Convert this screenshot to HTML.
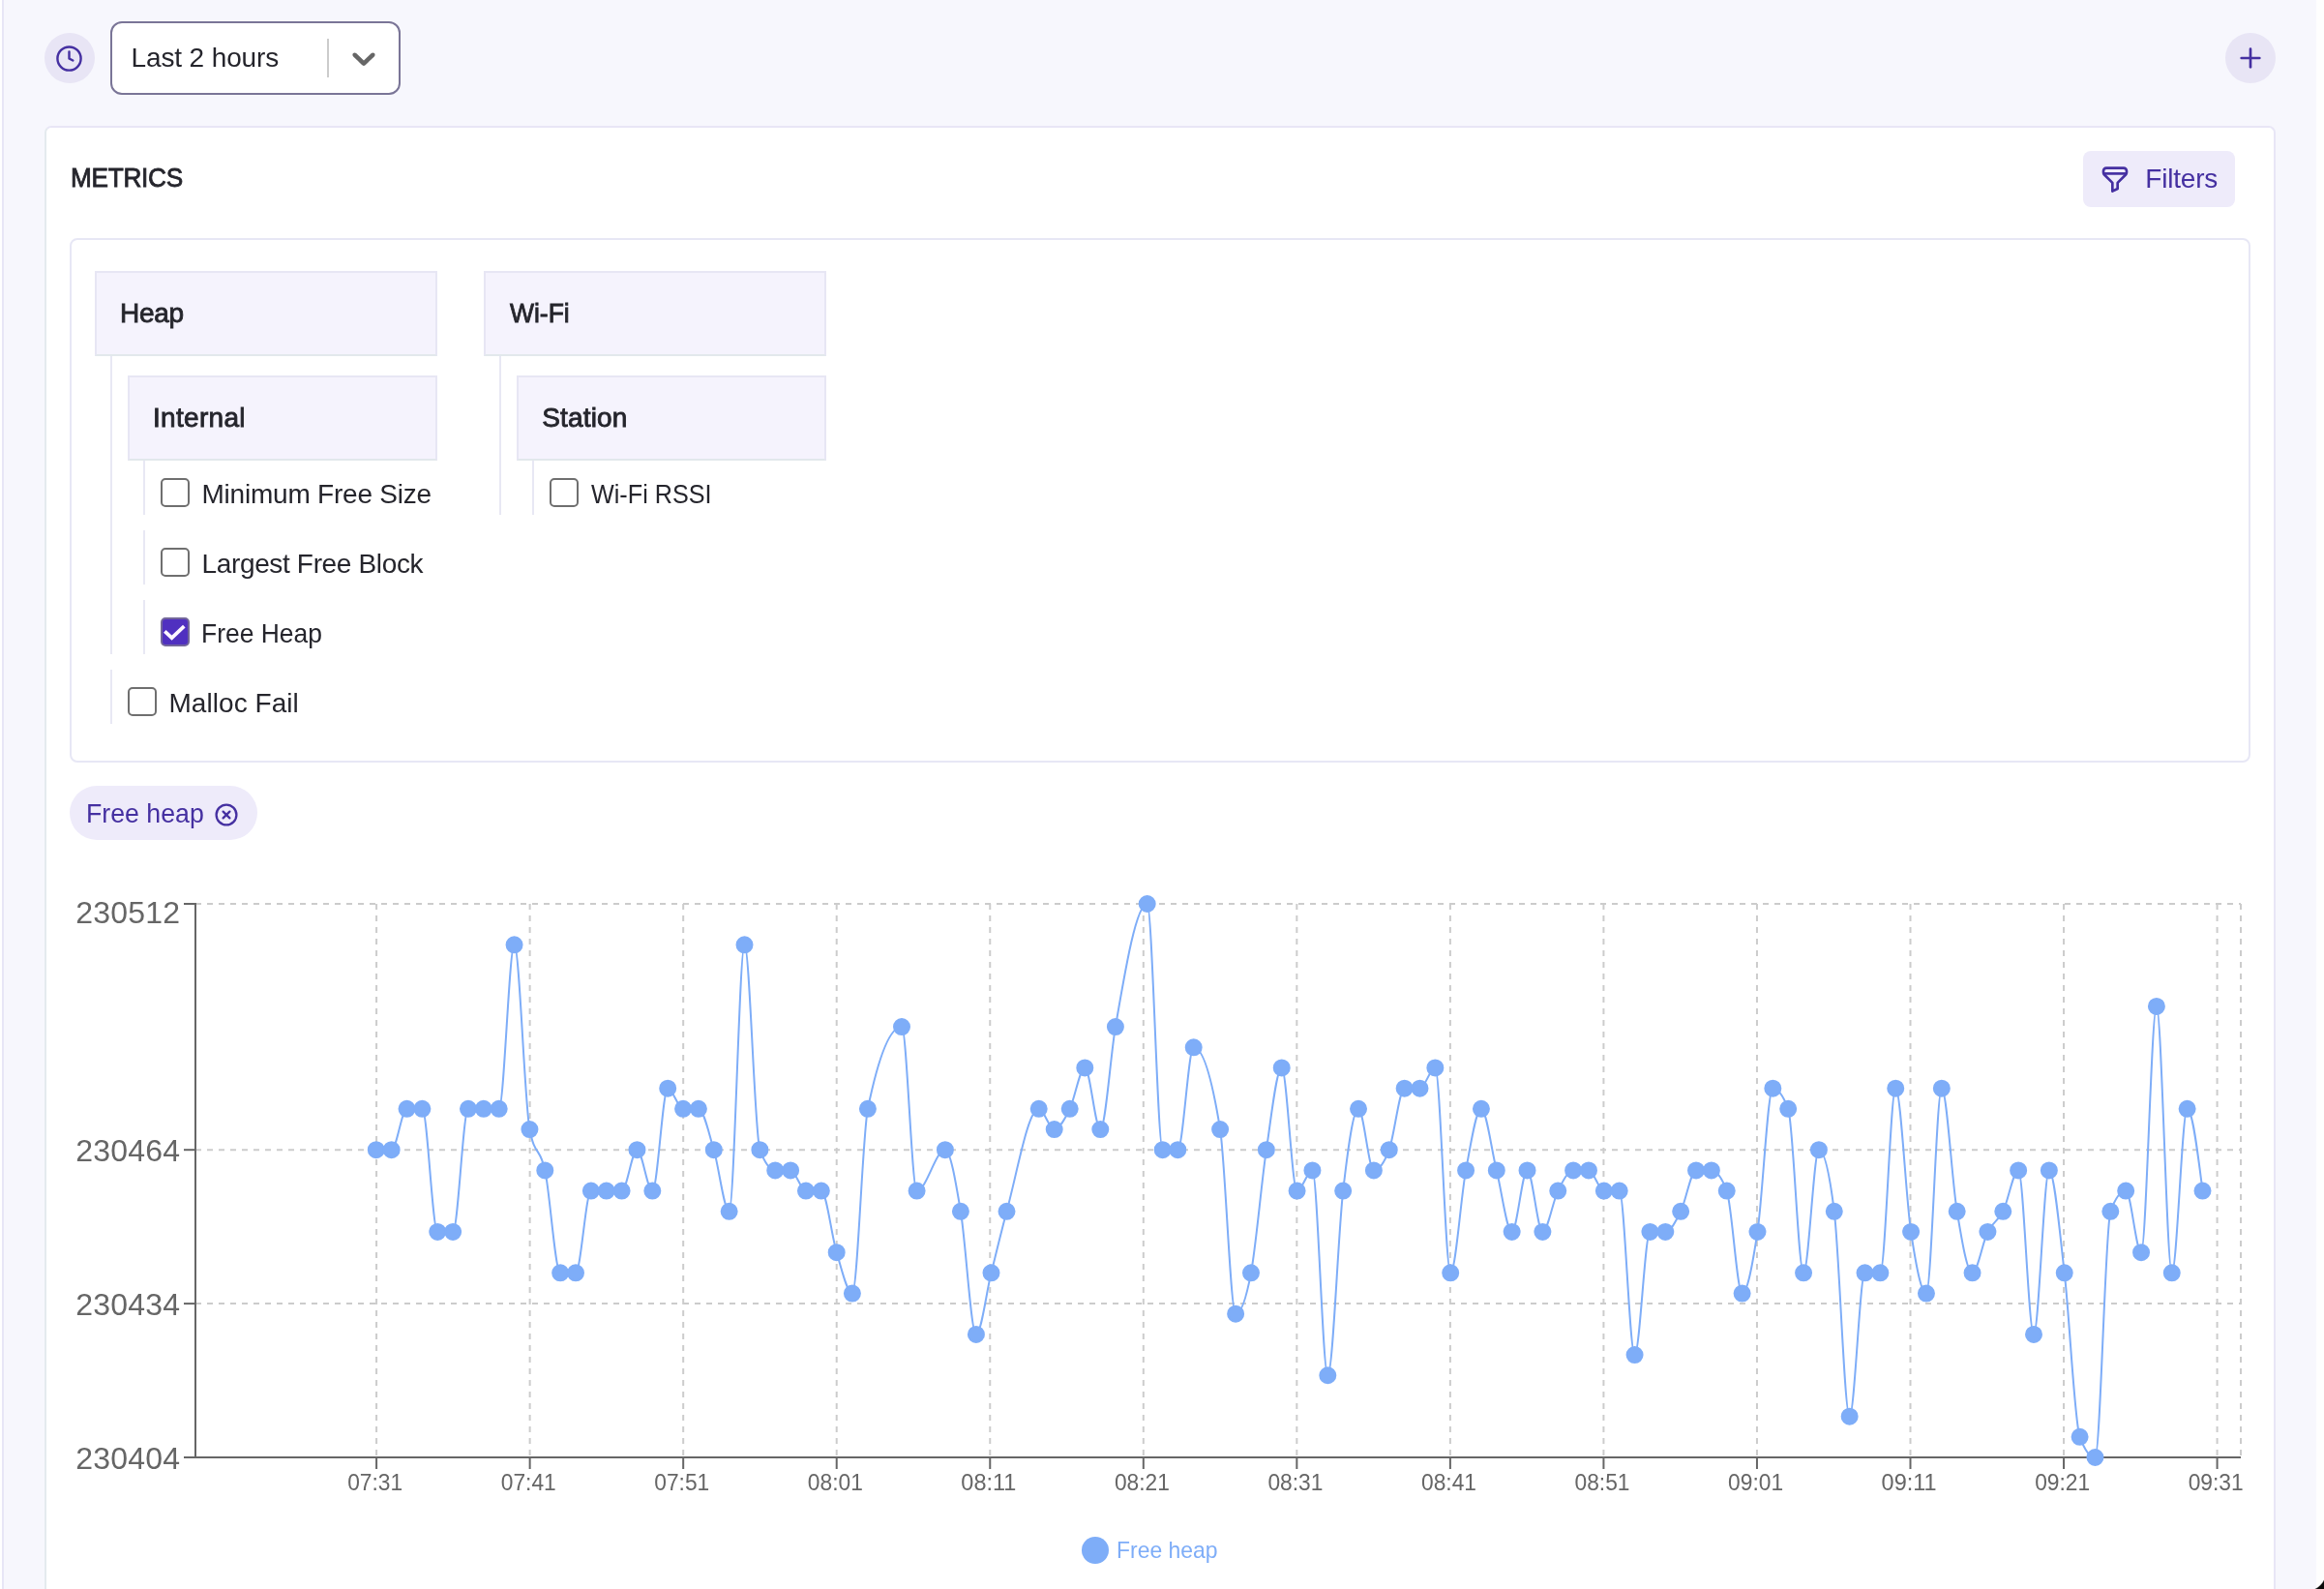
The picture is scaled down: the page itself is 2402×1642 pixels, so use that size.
<!DOCTYPE html>
<html><head><meta charset="utf-8"><title>Metrics</title>
<style>
*{box-sizing:border-box}
html,body{margin:0;padding:0}
html{width:2402px;height:1642px;overflow:hidden}
body{width:2402px;height:1642px;overflow:hidden;position:relative;will-change:transform;background:#f7f7fd;font-family:"Liberation Sans",sans-serif;color:#25252c;font-size:28px}
.abs,.gb,.vl,.cb,.lbl,.med,.chart{position:absolute}
.lstrip{left:0;top:0;width:4px;height:1642px;background:linear-gradient(90deg,#fff 0,#fff 2px,#e8e6f6 2px,#e8e6f6 4px)}
.rstrip{left:2393.5px;top:0;width:8.5px;height:1642px;background:#fefefe}
.corner{left:2384px;top:1624px;width:18px;height:18px;background:radial-gradient(circle at 0 0,rgba(0,0,0,0) 0,rgba(0,0,0,0) 19.4px,#0a0a0a 20.6px)}
.circ{width:52px;height:52px;border-radius:26px;background:#e8e5f5}
.circ svg{position:absolute;left:10px;top:10px}
.sel{left:114px;top:22px;width:300px;height:76px;border:2px solid #7a7597;border-radius:12px;background:#fff}
.sel .t{position:absolute;left:19.5px;top:20px;line-height:32px;letter-spacing:-0.12px;white-space:nowrap}
.sel .sep{position:absolute;left:222px;top:16px;width:2px;height:40px;background:#ccc}
.sel svg{position:absolute;left:240px;top:16px}
.card{left:46px;top:130px;width:2306px;height:1512px;border:2px solid #e8e6f6;border-left-color:#e4eaee;border-bottom:0;border-radius:7px 7px 0 0;background:#fff}
.h{left:72.5px;top:168px;line-height:32px;letter-spacing:-0.3px;-webkit-text-stroke:0.85px #25252c;white-space:nowrap;transform:scaleX(0.935);transform-origin:0 0}
.fbtn{left:2153px;top:156px;width:157px;height:58px;border-radius:8px;background:#eeebfa;color:#4530a1}
.fbtn svg{position:absolute;left:17px;top:13px}
.fbtn span{position:absolute;left:64.3px;top:13px;line-height:32px;letter-spacing:-0.2px}
.panel{left:72px;top:246px;width:2254px;height:542px;border:2px solid #e7e7f5;border-radius:8px;background:#fff}
.gb{background:#f5f3fd;border:2px solid #e7e6f4;border-bottom-color:#e2e8ec}
.med{top:26px;transform-origin:0 0;line-height:32px;-webkit-text-stroke:0.85px #25252c;white-space:nowrap}
.vl{width:2px;background:#e8e8f4}
.cb{width:30px;height:30px;border:2px solid #6f6f6f;border-radius:5px;background:#fff}
.cb.on{background:#5030c0;border-color:#73679b}
.cb svg{position:absolute;left:-2px;top:-2px}
.lbl{line-height:36px;white-space:nowrap;transform-origin:0 0}
.chip{left:72px;top:812px;width:194px;height:56px;border-radius:28px;background:#eeebfa;color:#4530a1}
.chip span{position:absolute;left:17px;top:13px;line-height:32px;transform:scaleX(0.954);transform-origin:0 0;letter-spacing:0px;white-space:nowrap}
.chip svg{position:absolute;left:148px;top:16px}
.chart{left:0;top:0}
</style></head>
<body>
<div class="abs lstrip"></div><div class="abs rstrip"></div>
<div class="abs circ" style="left:46px;top:34px"><svg style="left:11.3px;top:11.9px" width="29" height="29" viewBox="0 0 24 24" fill="none" stroke="#4530a1" stroke-width="2" stroke-linecap="round" stroke-linejoin="round"><circle cx="12" cy="12" r="10"/><polyline points="12 6.2 12 12 15.2 13.7"/></svg></div>
<div class="abs sel"><span class="t">Last 2 hours</span><div class="sep"></div><svg width="40" height="40" viewBox="0 0 20 20" fill="#666"><path d="M4.516 7.548c0.436-0.446 1.043-0.481 1.576 0l3.908 3.747 3.908-3.747c0.533-0.481 1.141-0.446 1.574 0 0.436 0.445 0.408 1.197 0 1.615-0.406 0.418-4.695 4.502-4.695 4.502-0.217 0.223-0.502 0.335-0.787 0.335s-0.57-0.112-0.789-0.335c0 0-4.287-4.084-4.695-4.502s-0.436-1.17 0-1.615z"/></svg></div>
<div class="abs circ" style="left:2300px;top:34px"><svg width="32" height="32" viewBox="0 0 24 24" fill="none" stroke="#4530a1" stroke-width="2" stroke-linecap="round" stroke-linejoin="round"><line x1="12" y1="5" x2="12" y2="19"/><line x1="5" y1="12" x2="19" y2="12"/></svg></div>
<div class="abs card"></div>
<div class="abs h">METRICS</div>
<div class="abs fbtn"><svg width="32" height="32" viewBox="0 0 24 24" fill="none" stroke="#4530a1" stroke-width="2" stroke-linejoin="round"><path d="M3 5.8a2.3 2.3 0 0 1 2.3-2.3h13.4a2.3 2.3 0 0 1 2.3 2.3v1.1a2.4 2.4 0 0 1-.7 1.7L14 14.9v4.6l-4 2v-6.6L3.7 8.6a2.4 2.4 0 0 1-.7-1.7z"/><path d="M3.4 7.8h17.2"/></svg><span>Filters</span></div>
<div class="abs panel"></div>
<div class="gb" style="left:98px;top:280px;width:354px;height:88px"><span class="med" style="left:24.1px;letter-spacing:-0.35px;transform:scaleX(1)">Heap</span></div><div class="gb" style="left:132px;top:388px;width:320px;height:88px"><span class="med" style="left:24px;letter-spacing:0.3px;transform:scaleX(1)">Internal</span></div><div class="gb" style="left:500px;top:280px;width:354px;height:88px"><span class="med" style="left:24.6px;letter-spacing:0px;transform:scaleX(0.945)">Wi-Fi</span></div><div class="gb" style="left:534px;top:388px;width:320px;height:88px"><span class="med" style="left:24.3px;letter-spacing:0.15px;transform:scaleX(1)">Station</span></div><div class="vl" style="left:114px;top:368px;height:308px"></div><div class="vl" style="left:114px;top:692px;height:56px"></div><div class="vl" style="left:148px;top:476px;height:56px"></div><div class="vl" style="left:148px;top:548px;height:56px"></div><div class="vl" style="left:148px;top:620px;height:56px"></div><div class="vl" style="left:516px;top:368px;height:164px"></div><div class="vl" style="left:550px;top:476px;height:56px"></div><div class="cb" style="left:166px;top:494px"></div><span class="lbl" style="left:208.5px;top:493px;letter-spacing:-0.22px;transform:scaleX(1)">Minimum Free Size</span><div class="cb" style="left:166px;top:566px"></div><span class="lbl" style="left:208.5px;top:565px;letter-spacing:-0.35px;transform:scaleX(1)">Largest Free Block</span><div class="cb on" style="left:166px;top:638px"><svg width="30" height="30" viewBox="0 0 30 30"><path d="M4.3 14.3 L11.6 21.2 L24.3 9.1" fill="none" stroke="#fdf7ff" stroke-width="3.7"/></svg></div><span class="lbl" style="left:207.8px;top:637px;letter-spacing:0px;transform:scaleX(0.944)">Free Heap</span><div class="cb" style="left:132px;top:710px"></div><span class="lbl" style="left:174.5px;top:709px;letter-spacing:0.05px;transform:scaleX(1)">Malloc Fail</span><div class="cb" style="left:568px;top:494px"></div><span class="lbl" style="left:610.5px;top:493px;letter-spacing:0px;transform:scaleX(0.8996)">Wi-Fi RSSI</span>
<div class="abs chip"><span>Free heap</span><svg width="28" height="28" viewBox="0 0 28 28" fill="none" stroke="#4530a1" stroke-width="2.3" stroke-linecap="round"><circle cx="14" cy="14" r="10.4"/><path d="M10.6 10.6l6.8 6.8M17.4 10.6l-6.8 6.8"/></svg></div>
<svg class="chart" width="2402" height="1642" viewBox="0 0 2402 1642">
<g stroke="#ccc" stroke-width="2" stroke-dasharray="6 6" fill="none"><line x1="202.0" y1="934" x2="2316.0" y2="934"/><line x1="202.0" y1="1188.2" x2="2316.0" y2="1188.2"/><line x1="202.0" y1="1347.1" x2="2316.0" y2="1347.1"/><line x1="389.10" y1="934.0" x2="389.10" y2="1506.0"/><line x1="547.64" y1="934.0" x2="547.64" y2="1506.0"/><line x1="706.18" y1="934.0" x2="706.18" y2="1506.0"/><line x1="864.72" y1="934.0" x2="864.72" y2="1506.0"/><line x1="1023.26" y1="934.0" x2="1023.26" y2="1506.0"/><line x1="1181.80" y1="934.0" x2="1181.80" y2="1506.0"/><line x1="1340.34" y1="934.0" x2="1340.34" y2="1506.0"/><line x1="1498.88" y1="934.0" x2="1498.88" y2="1506.0"/><line x1="1657.42" y1="934.0" x2="1657.42" y2="1506.0"/><line x1="1815.96" y1="934.0" x2="1815.96" y2="1506.0"/><line x1="1974.50" y1="934.0" x2="1974.50" y2="1506.0"/><line x1="2133.04" y1="934.0" x2="2133.04" y2="1506.0"/><line x1="2291.58" y1="934.0" x2="2291.58" y2="1506.0"/><line x1="2316.00" y1="934.0" x2="2316.00" y2="1506.0"/></g>
<g stroke="#666" stroke-width="2" fill="none"><line x1="202.0" y1="933.0" x2="202.0" y2="1507.0"/><line x1="201.0" y1="1506.0" x2="2316.0" y2="1506.0"/><line x1="190.0" y1="934" x2="202.0" y2="934"/><line x1="190.0" y1="1188.2" x2="202.0" y2="1188.2"/><line x1="190.0" y1="1347.1" x2="202.0" y2="1347.1"/><line x1="190.0" y1="1506" x2="202.0" y2="1506"/><line x1="389.10" y1="1506.0" x2="389.10" y2="1518.0"/><line x1="547.64" y1="1506.0" x2="547.64" y2="1518.0"/><line x1="706.18" y1="1506.0" x2="706.18" y2="1518.0"/><line x1="864.72" y1="1506.0" x2="864.72" y2="1518.0"/><line x1="1023.26" y1="1506.0" x2="1023.26" y2="1518.0"/><line x1="1181.80" y1="1506.0" x2="1181.80" y2="1518.0"/><line x1="1340.34" y1="1506.0" x2="1340.34" y2="1518.0"/><line x1="1498.88" y1="1506.0" x2="1498.88" y2="1518.0"/><line x1="1657.42" y1="1506.0" x2="1657.42" y2="1518.0"/><line x1="1815.96" y1="1506.0" x2="1815.96" y2="1518.0"/><line x1="1974.50" y1="1506.0" x2="1974.50" y2="1518.0"/><line x1="2133.04" y1="1506.0" x2="2133.04" y2="1518.0"/><line x1="2291.58" y1="1506.0" x2="2291.58" y2="1518.0"/></g>
<g font-size="32" fill="#666" letter-spacing="0.2"><text x="186.3" y="953.8" text-anchor="end">230512</text><text x="186.3" y="1200.0" text-anchor="end">230464</text><text x="186.3" y="1358.9" text-anchor="end">230434</text><text x="186.3" y="1517.8" text-anchor="end">230404</text></g>
<g font-size="24" fill="#666"><text x="387.70" y="1540" text-anchor="middle" textLength="57" lengthAdjust="spacingAndGlyphs">07:31</text><text x="546.24" y="1540" text-anchor="middle" textLength="57" lengthAdjust="spacingAndGlyphs">07:41</text><text x="704.78" y="1540" text-anchor="middle" textLength="57" lengthAdjust="spacingAndGlyphs">07:51</text><text x="863.32" y="1540" text-anchor="middle" textLength="57" lengthAdjust="spacingAndGlyphs">08:01</text><text x="1021.86" y="1540" text-anchor="middle" textLength="57" lengthAdjust="spacingAndGlyphs">08:11</text><text x="1180.40" y="1540" text-anchor="middle" textLength="57" lengthAdjust="spacingAndGlyphs">08:21</text><text x="1338.94" y="1540" text-anchor="middle" textLength="57" lengthAdjust="spacingAndGlyphs">08:31</text><text x="1497.48" y="1540" text-anchor="middle" textLength="57" lengthAdjust="spacingAndGlyphs">08:41</text><text x="1656.02" y="1540" text-anchor="middle" textLength="57" lengthAdjust="spacingAndGlyphs">08:51</text><text x="1814.56" y="1540" text-anchor="middle" textLength="57" lengthAdjust="spacingAndGlyphs">09:01</text><text x="1973.10" y="1540" text-anchor="middle" textLength="57" lengthAdjust="spacingAndGlyphs">09:11</text><text x="2131.64" y="1540" text-anchor="middle" textLength="57" lengthAdjust="spacingAndGlyphs">09:21</text><text x="2290.18" y="1540" text-anchor="middle" textLength="57" lengthAdjust="spacingAndGlyphs">09:31</text></g>
<path d="M388.80,1188.22C394.09,1188.22,399.38,1188.22,404.66,1188.22C409.95,1188.22,415.24,1145.85,420.53,1145.85C425.81,1145.85,431.10,1145.85,436.39,1145.85C441.68,1145.85,446.96,1272.96,452.25,1272.96C457.54,1272.96,462.83,1272.96,468.12,1272.96C473.40,1272.96,478.69,1145.85,483.98,1145.85C489.27,1145.85,494.55,1145.85,499.84,1145.85C505.13,1145.85,510.42,1145.85,515.70,1145.85C520.99,1145.85,526.28,976.37,531.57,976.37C536.85,976.37,542.14,1138.79,547.43,1167.04C552.72,1195.28,558.01,1184.69,563.29,1209.41C568.58,1234.12,573.87,1315.33,579.16,1315.33C584.44,1315.33,589.73,1315.33,595.02,1315.33C600.31,1315.33,605.59,1230.59,610.88,1230.59C616.17,1230.59,621.46,1230.59,626.75,1230.59C632.03,1230.59,637.32,1230.59,642.61,1230.59C647.90,1230.59,653.18,1188.22,658.47,1188.22C663.76,1188.22,669.05,1230.59,674.33,1230.59C679.62,1230.59,684.91,1124.67,690.20,1124.67C695.48,1124.67,700.77,1145.85,706.06,1145.85C711.35,1145.85,716.64,1145.85,721.92,1145.85C727.21,1145.85,732.50,1170.57,737.79,1188.22C743.07,1205.88,748.36,1251.78,753.65,1251.78C758.94,1251.78,764.22,976.37,769.51,976.37C774.80,976.37,780.09,1174.10,785.38,1188.22C790.66,1202.35,795.95,1209.41,801.24,1209.41C806.53,1209.41,811.81,1209.41,817.10,1209.41C822.39,1209.41,827.68,1230.59,832.96,1230.59C838.25,1230.59,843.54,1230.59,848.83,1230.59C854.11,1230.59,859.40,1276.61,864.69,1294.15C870.09,1312.07,875.50,1336.52,880.90,1336.52C886.23,1336.52,891.57,1171.60,896.90,1145.85C908.60,1089.36,920.30,1061.11,932.00,1061.11C937.20,1061.11,942.40,1230.59,947.60,1230.59C957.37,1230.59,967.13,1188.22,976.90,1188.22C982.23,1188.22,987.57,1220.00,992.90,1251.78C998.23,1283.56,1003.57,1378.89,1008.90,1378.89C1014.10,1378.89,1019.30,1336.26,1024.50,1315.33C1029.83,1293.87,1035.17,1271.61,1040.50,1251.78C1051.57,1210.63,1062.63,1145.85,1073.70,1145.85C1079.03,1145.85,1084.37,1167.04,1089.70,1167.04C1095.03,1167.04,1100.37,1156.67,1105.70,1145.85C1110.90,1135.30,1116.10,1103.48,1121.30,1103.48C1126.63,1103.48,1131.97,1167.04,1137.30,1167.04C1142.50,1167.04,1147.70,1091.53,1152.90,1061.11C1163.83,997.14,1174.77,934.00,1185.70,934.00C1191.03,934.00,1196.37,1188.22,1201.70,1188.22C1206.90,1188.22,1212.10,1188.22,1217.30,1188.22C1222.77,1188.22,1228.23,1082.30,1233.70,1082.30C1242.83,1082.30,1251.97,1110.54,1261.10,1167.04C1266.44,1200.08,1271.79,1357.70,1277.13,1357.70C1282.42,1357.70,1287.70,1343.58,1292.99,1315.33C1298.28,1287.09,1303.57,1223.53,1308.85,1188.22C1314.14,1152.91,1319.43,1103.48,1324.72,1103.48C1330.00,1103.48,1335.29,1230.59,1340.58,1230.59C1345.87,1230.59,1351.16,1209.41,1356.44,1209.41C1361.73,1209.41,1367.02,1421.26,1372.31,1421.26C1377.59,1421.26,1382.88,1276.49,1388.17,1230.59C1393.46,1184.69,1398.74,1145.85,1404.03,1145.85C1409.32,1145.85,1414.61,1209.41,1419.89,1209.41C1425.18,1209.41,1430.47,1202.35,1435.76,1188.22C1441.05,1174.10,1446.33,1124.67,1451.62,1124.67C1456.91,1124.67,1462.20,1124.67,1467.48,1124.67C1472.77,1124.67,1478.06,1103.48,1483.35,1103.48C1488.63,1103.48,1493.92,1315.33,1499.21,1315.33C1504.50,1315.33,1509.79,1237.65,1515.07,1209.41C1520.36,1181.16,1525.65,1145.85,1530.94,1145.85C1536.22,1145.85,1541.51,1188.22,1546.80,1209.41C1552.09,1230.59,1557.37,1272.96,1562.66,1272.96C1567.95,1272.96,1573.24,1209.41,1578.52,1209.41C1583.81,1209.41,1589.10,1272.96,1594.39,1272.96C1599.68,1272.96,1604.96,1241.19,1610.25,1230.59C1615.54,1220.00,1620.83,1209.41,1626.11,1209.41C1631.40,1209.41,1636.69,1209.41,1641.98,1209.41C1647.26,1209.41,1652.55,1230.59,1657.84,1230.59C1663.13,1230.59,1668.42,1230.59,1673.70,1230.59C1678.99,1230.59,1684.28,1400.07,1689.57,1400.07C1694.85,1400.07,1700.14,1272.96,1705.43,1272.96C1710.72,1272.96,1716.00,1272.96,1721.29,1272.96C1726.58,1272.96,1731.87,1262.37,1737.15,1251.78C1742.44,1241.19,1747.73,1209.41,1753.02,1209.41C1758.31,1209.41,1763.59,1209.41,1768.88,1209.41C1774.17,1209.41,1779.46,1216.47,1784.74,1230.59C1790.03,1244.72,1795.32,1336.52,1800.61,1336.52C1805.89,1336.52,1811.18,1308.27,1816.47,1272.96C1821.76,1237.65,1827.05,1124.67,1832.33,1124.67C1837.62,1124.67,1842.91,1131.73,1848.20,1145.85C1853.48,1159.98,1858.77,1315.33,1864.06,1315.33C1869.35,1315.33,1874.63,1188.22,1879.92,1188.22C1885.21,1188.22,1890.50,1209.41,1895.78,1251.78C1901.07,1294.15,1906.36,1463.63,1911.65,1463.63C1916.94,1463.63,1922.22,1315.33,1927.51,1315.33C1932.80,1315.33,1938.09,1315.33,1943.37,1315.33C1948.66,1315.33,1953.95,1124.67,1959.24,1124.67C1964.52,1124.67,1969.81,1237.65,1975.10,1272.96C1980.39,1308.27,1985.68,1336.52,1990.96,1336.52C1996.25,1336.52,2001.54,1124.67,2006.83,1124.67C2012.11,1124.67,2017.40,1220.00,2022.69,1251.78C2027.98,1283.56,2033.26,1315.33,2038.55,1315.33C2043.84,1315.33,2049.13,1283.56,2054.41,1272.96C2059.70,1262.37,2064.99,1262.37,2070.28,1251.78C2075.57,1241.19,2080.85,1209.41,2086.14,1209.41C2091.43,1209.41,2096.72,1378.89,2102.00,1378.89C2107.29,1378.89,2112.58,1209.41,2117.87,1209.41C2123.15,1209.41,2128.44,1269.43,2133.73,1315.33C2139.02,1361.23,2144.31,1470.69,2149.59,1484.81C2154.88,1498.94,2160.17,1506.00,2165.46,1506.00C2170.74,1506.00,2176.03,1265.90,2181.32,1251.78C2186.61,1237.65,2191.89,1230.59,2197.18,1230.59C2202.47,1230.59,2207.76,1294.15,2213.05,1294.15C2218.33,1294.15,2223.62,1039.93,2228.91,1039.93C2234.20,1039.93,2239.48,1315.33,2244.77,1315.33C2250.06,1315.33,2255.35,1145.85,2260.63,1145.85C2265.92,1145.85,2271.21,1188.22,2276.50,1230.59" fill="none" stroke="#7eadf8" stroke-width="2"/>
<g fill="#7eadf8" stroke="#7eadf8" stroke-width="2"><circle cx="388.80" cy="1188.22" r="8"/><circle cx="404.66" cy="1188.22" r="8"/><circle cx="420.53" cy="1145.85" r="8"/><circle cx="436.39" cy="1145.85" r="8"/><circle cx="452.25" cy="1272.96" r="8"/><circle cx="468.12" cy="1272.96" r="8"/><circle cx="483.98" cy="1145.85" r="8"/><circle cx="499.84" cy="1145.85" r="8"/><circle cx="515.70" cy="1145.85" r="8"/><circle cx="531.57" cy="976.37" r="8"/><circle cx="547.43" cy="1167.04" r="8"/><circle cx="563.29" cy="1209.41" r="8"/><circle cx="579.16" cy="1315.33" r="8"/><circle cx="595.02" cy="1315.33" r="8"/><circle cx="610.88" cy="1230.59" r="8"/><circle cx="626.75" cy="1230.59" r="8"/><circle cx="642.61" cy="1230.59" r="8"/><circle cx="658.47" cy="1188.22" r="8"/><circle cx="674.33" cy="1230.59" r="8"/><circle cx="690.20" cy="1124.67" r="8"/><circle cx="706.06" cy="1145.85" r="8"/><circle cx="721.92" cy="1145.85" r="8"/><circle cx="737.79" cy="1188.22" r="8"/><circle cx="753.65" cy="1251.78" r="8"/><circle cx="769.51" cy="976.37" r="8"/><circle cx="785.38" cy="1188.22" r="8"/><circle cx="801.24" cy="1209.41" r="8"/><circle cx="817.10" cy="1209.41" r="8"/><circle cx="832.96" cy="1230.59" r="8"/><circle cx="848.83" cy="1230.59" r="8"/><circle cx="864.69" cy="1294.15" r="8"/><circle cx="880.90" cy="1336.52" r="8"/><circle cx="896.90" cy="1145.85" r="8"/><circle cx="932.00" cy="1061.11" r="8"/><circle cx="947.60" cy="1230.59" r="8"/><circle cx="976.90" cy="1188.22" r="8"/><circle cx="992.90" cy="1251.78" r="8"/><circle cx="1008.90" cy="1378.89" r="8"/><circle cx="1024.50" cy="1315.33" r="8"/><circle cx="1040.50" cy="1251.78" r="8"/><circle cx="1073.70" cy="1145.85" r="8"/><circle cx="1089.70" cy="1167.04" r="8"/><circle cx="1105.70" cy="1145.85" r="8"/><circle cx="1121.30" cy="1103.48" r="8"/><circle cx="1137.30" cy="1167.04" r="8"/><circle cx="1152.90" cy="1061.11" r="8"/><circle cx="1185.70" cy="934.00" r="8"/><circle cx="1201.70" cy="1188.22" r="8"/><circle cx="1217.30" cy="1188.22" r="8"/><circle cx="1233.70" cy="1082.30" r="8"/><circle cx="1261.10" cy="1167.04" r="8"/><circle cx="1277.13" cy="1357.70" r="8"/><circle cx="1292.99" cy="1315.33" r="8"/><circle cx="1308.85" cy="1188.22" r="8"/><circle cx="1324.72" cy="1103.48" r="8"/><circle cx="1340.58" cy="1230.59" r="8"/><circle cx="1356.44" cy="1209.41" r="8"/><circle cx="1372.31" cy="1421.26" r="8"/><circle cx="1388.17" cy="1230.59" r="8"/><circle cx="1404.03" cy="1145.85" r="8"/><circle cx="1419.89" cy="1209.41" r="8"/><circle cx="1435.76" cy="1188.22" r="8"/><circle cx="1451.62" cy="1124.67" r="8"/><circle cx="1467.48" cy="1124.67" r="8"/><circle cx="1483.35" cy="1103.48" r="8"/><circle cx="1499.21" cy="1315.33" r="8"/><circle cx="1515.07" cy="1209.41" r="8"/><circle cx="1530.94" cy="1145.85" r="8"/><circle cx="1546.80" cy="1209.41" r="8"/><circle cx="1562.66" cy="1272.96" r="8"/><circle cx="1578.52" cy="1209.41" r="8"/><circle cx="1594.39" cy="1272.96" r="8"/><circle cx="1610.25" cy="1230.59" r="8"/><circle cx="1626.11" cy="1209.41" r="8"/><circle cx="1641.98" cy="1209.41" r="8"/><circle cx="1657.84" cy="1230.59" r="8"/><circle cx="1673.70" cy="1230.59" r="8"/><circle cx="1689.57" cy="1400.07" r="8"/><circle cx="1705.43" cy="1272.96" r="8"/><circle cx="1721.29" cy="1272.96" r="8"/><circle cx="1737.15" cy="1251.78" r="8"/><circle cx="1753.02" cy="1209.41" r="8"/><circle cx="1768.88" cy="1209.41" r="8"/><circle cx="1784.74" cy="1230.59" r="8"/><circle cx="1800.61" cy="1336.52" r="8"/><circle cx="1816.47" cy="1272.96" r="8"/><circle cx="1832.33" cy="1124.67" r="8"/><circle cx="1848.20" cy="1145.85" r="8"/><circle cx="1864.06" cy="1315.33" r="8"/><circle cx="1879.92" cy="1188.22" r="8"/><circle cx="1895.78" cy="1251.78" r="8"/><circle cx="1911.65" cy="1463.63" r="8"/><circle cx="1927.51" cy="1315.33" r="8"/><circle cx="1943.37" cy="1315.33" r="8"/><circle cx="1959.24" cy="1124.67" r="8"/><circle cx="1975.10" cy="1272.96" r="8"/><circle cx="1990.96" cy="1336.52" r="8"/><circle cx="2006.83" cy="1124.67" r="8"/><circle cx="2022.69" cy="1251.78" r="8"/><circle cx="2038.55" cy="1315.33" r="8"/><circle cx="2054.41" cy="1272.96" r="8"/><circle cx="2070.28" cy="1251.78" r="8"/><circle cx="2086.14" cy="1209.41" r="8"/><circle cx="2102.00" cy="1378.89" r="8"/><circle cx="2117.87" cy="1209.41" r="8"/><circle cx="2133.73" cy="1315.33" r="8"/><circle cx="2149.59" cy="1484.81" r="8"/><circle cx="2165.46" cy="1506.00" r="8"/><circle cx="2181.32" cy="1251.78" r="8"/><circle cx="2197.18" cy="1230.59" r="8"/><circle cx="2213.05" cy="1294.15" r="8"/><circle cx="2228.91" cy="1039.93" r="8"/><circle cx="2244.77" cy="1315.33" r="8"/><circle cx="2260.63" cy="1145.85" r="8"/><circle cx="2276.50" cy="1230.59" r="8"/></g>
<circle cx="1132" cy="1602" r="14" fill="#7eadf8"/>
<text x="1154" y="1609.8" font-size="24" fill="#7eadf8" textLength="104.6" lengthAdjust="spacingAndGlyphs">Free heap</text>
</svg>
<div class="abs corner"></div>
</body></html>
